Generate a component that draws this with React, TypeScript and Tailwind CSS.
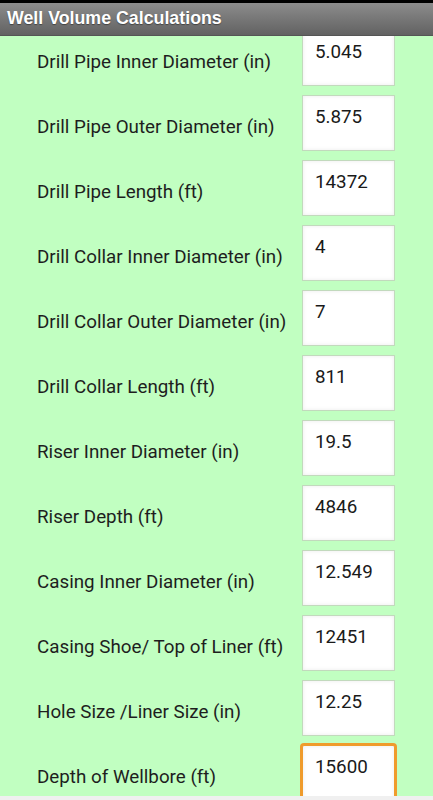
import React from "react";

const rows: { label: string; value: string }[] = [
  { label: "Drill Pipe Inner Diameter (in)", value: "5.045" },
  { label: "Drill Pipe Outer Diameter (in)", value: "5.875" },
  { label: "Drill Pipe Length (ft)", value: "14372" },
  { label: "Drill Collar Inner Diameter (in)", value: "4" },
  { label: "Drill Collar Outer Diameter (in)", value: "7" },
  { label: "Drill Collar Length (ft)", value: "811" },
  { label: "Riser Inner Diameter (in)", value: "19.5" },
  { label: "Riser Depth (ft)", value: "4846" },
  { label: "Casing Inner Diameter (in)", value: "12.549" },
  { label: "Casing Shoe/ Top of Liner (ft)", value: "12451" },
  { label: "Hole Size /Liner Size (in)", value: "12.25" },
  { label: "Depth of Wellbore (ft)", value: "15600" },
];

export default function App() {
  return (
    <div className="w-[433px] h-[800px] flex flex-col bg-[#c1ffc1] overflow-hidden">
      <div className="h-[3px] bg-black shrink-0" />
      <div className="h-[33px] shrink-0 flex items-center pl-[7px] bg-gradient-to-b from-[#8c8c8c] to-[#626262] border-b border-[#555]">
        <span
          className="text-white font-bold text-[17.8px] leading-none [text-shadow:0_1px_1px_rgba(0,0,0,0.4)]"
          style={{ fontFamily: "'Liberation Sans', Arial, sans-serif" }}
        >
          Well Volume Calculations
        </span>
      </div>
      <div className="flex-1 overflow-hidden">
        <div className="-mt-[6px] flex flex-col" style={{ fontFamily: "Roboto, 'Noto Sans', sans-serif" }}>
          {rows.map((r, i) => {
            const focused = i === rows.length - 1;
            return (
              <div key={r.label} className="h-[65px] flex items-center shrink-0">
                <div className="w-[302px] pl-[37px] pt-[1px] text-[18.8px] text-[#1e1e1e] leading-tight">
                  {r.label}
                </div>
                <div
                  className={
                    "self-start w-[93px] h-[56px] bg-white px-[12px] pt-[7px] text-[18.8px] text-[#1a1a1a] leading-normal shadow-[inset_0_0_4px_rgba(0,0,0,0.08)] " +
                    (focused
                      ? "border border-[#ef9b2c] ring-2 ring-[#ef9b2c] rounded-[2px]"
                      : "border border-[#c2d9bd]")
                  }
                >
                  {r.value}
                </div>
              </div>
            );
          })}
        </div>
      </div>
      <div className="h-[4px] shrink-0 bg-[#f0f0f0]" />
    </div>
  );
}
